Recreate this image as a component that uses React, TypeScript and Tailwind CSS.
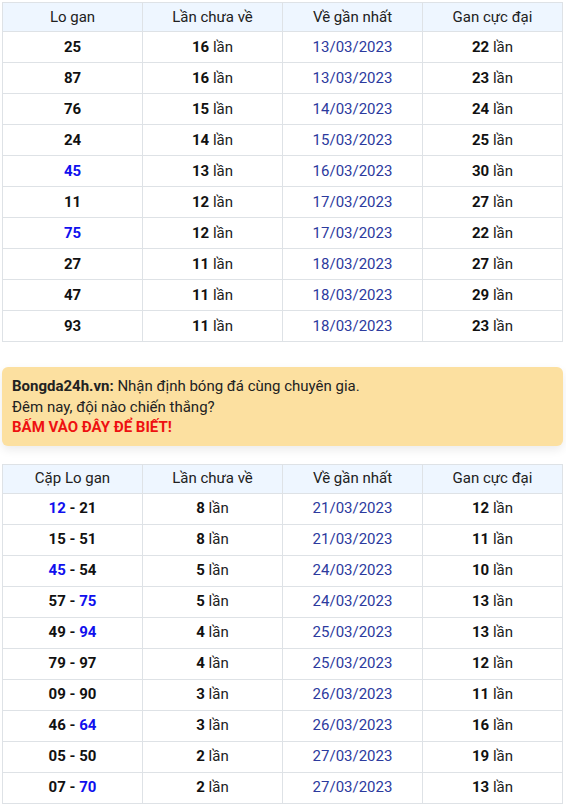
import React from "react"

type Part = { t: string; blue?: boolean }
type Row = { pair: Part[]; miss: number; last: string; max: number }

const loGan: Row[] = [
  { pair: [{ t: "25" }], miss: 16, last: "13/03/2023", max: 22 },
  { pair: [{ t: "87" }], miss: 16, last: "13/03/2023", max: 23 },
  { pair: [{ t: "76" }], miss: 15, last: "14/03/2023", max: 24 },
  { pair: [{ t: "24" }], miss: 14, last: "15/03/2023", max: 25 },
  { pair: [{ t: "45", blue: true }], miss: 13, last: "16/03/2023", max: 30 },
  { pair: [{ t: "11" }], miss: 12, last: "17/03/2023", max: 27 },
  { pair: [{ t: "75", blue: true }], miss: 12, last: "17/03/2023", max: 22 },
  { pair: [{ t: "27" }], miss: 11, last: "18/03/2023", max: 27 },
  { pair: [{ t: "47" }], miss: 11, last: "18/03/2023", max: 29 },
  { pair: [{ t: "93" }], miss: 11, last: "18/03/2023", max: 23 },
]

const capLoGan: Row[] = [
  { pair: [{ t: "12", blue: true }, { t: " - " }, { t: "21" }], miss: 8, last: "21/03/2023", max: 12 },
  { pair: [{ t: "15" }, { t: " - " }, { t: "51" }], miss: 8, last: "21/03/2023", max: 11 },
  { pair: [{ t: "45", blue: true }, { t: " - " }, { t: "54" }], miss: 5, last: "24/03/2023", max: 10 },
  { pair: [{ t: "57" }, { t: " - " }, { t: "75", blue: true }], miss: 5, last: "24/03/2023", max: 13 },
  { pair: [{ t: "49" }, { t: " - " }, { t: "94", blue: true }], miss: 4, last: "25/03/2023", max: 13 },
  { pair: [{ t: "79" }, { t: " - " }, { t: "97" }], miss: 4, last: "25/03/2023", max: 12 },
  { pair: [{ t: "09" }, { t: " - " }, { t: "90" }], miss: 3, last: "26/03/2023", max: 11 },
  { pair: [{ t: "46" }, { t: " - " }, { t: "64", blue: true }], miss: 3, last: "26/03/2023", max: 16 },
  { pair: [{ t: "05" }, { t: " - " }, { t: "50" }], miss: 2, last: "27/03/2023", max: 19 },
  { pair: [{ t: "07" }, { t: " - " }, { t: "70", blue: true }], miss: 2, last: "27/03/2023", max: 13 },
]

function GanTable({ first, rows }: { first: string; rows: Row[] }) {
  const th = "border border-[#dee2e6] h-[29px] font-normal text-center"
  const td = "border border-[#dee2e6] h-[31px] text-center"
  return (
    <table className="w-[561px] table-fixed border-collapse text-[15px] text-[#212121]">
      <thead>
        <tr className="bg-[#eef6ff]">
          <th className={th}>{first}</th>
          <th className={th}>Lần chưa về</th>
          <th className={th}>Về gần nhất</th>
          <th className={th}>Gan cực đại</th>
        </tr>
      </thead>
      <tbody>
        {rows.map((r, i) => (
          <tr key={i} className="bg-white">
            <td className={td + " font-bold text-[#111]"}>
              {r.pair.map((p, j) => (
                <span key={j} className={p.blue ? "text-[#1010ee]" : ""}>{p.t}</span>
              ))}
            </td>
            <td className={td}>
              <b className="text-[#111]">{r.miss}</b> lần
            </td>
            <td className={td + " text-[#2c3a9e]"}>{r.last}</td>
            <td className={td}>
              <b className="text-[#111]">{r.max}</b> lần
            </td>
          </tr>
        ))}
      </tbody>
    </table>
  )
}

export default function App() {
  return (
    <div className="min-h-screen bg-white pt-[2px] pl-[2px] font-['Roboto',sans-serif]">
      <GanTable first="Lo gan" rows={loGan} />
      <div className="mt-[25px] w-[561px] rounded-md bg-[#fce0a0] px-[10px] pt-[9px] pb-[8px] text-[15px] leading-[20.5px] text-[#222] shadow-[0_4px_10px_rgba(0,0,0,0.08)]">
        <div>
          <b>Bongda24h.vn:</b> Nhận định bóng đá cùng chuyên gia.
        </div>
        <div>Đêm nay, đội nào chiến thắng?</div>
        <div className="font-bold text-[#ee1111]">BẤM VÀO ĐÂY ĐỂ BIẾT!</div>
      </div>
      <div className="mt-[18px]">
        <GanTable first="Cặp Lo gan" rows={capLoGan} />
      </div>
    </div>
  )
}
